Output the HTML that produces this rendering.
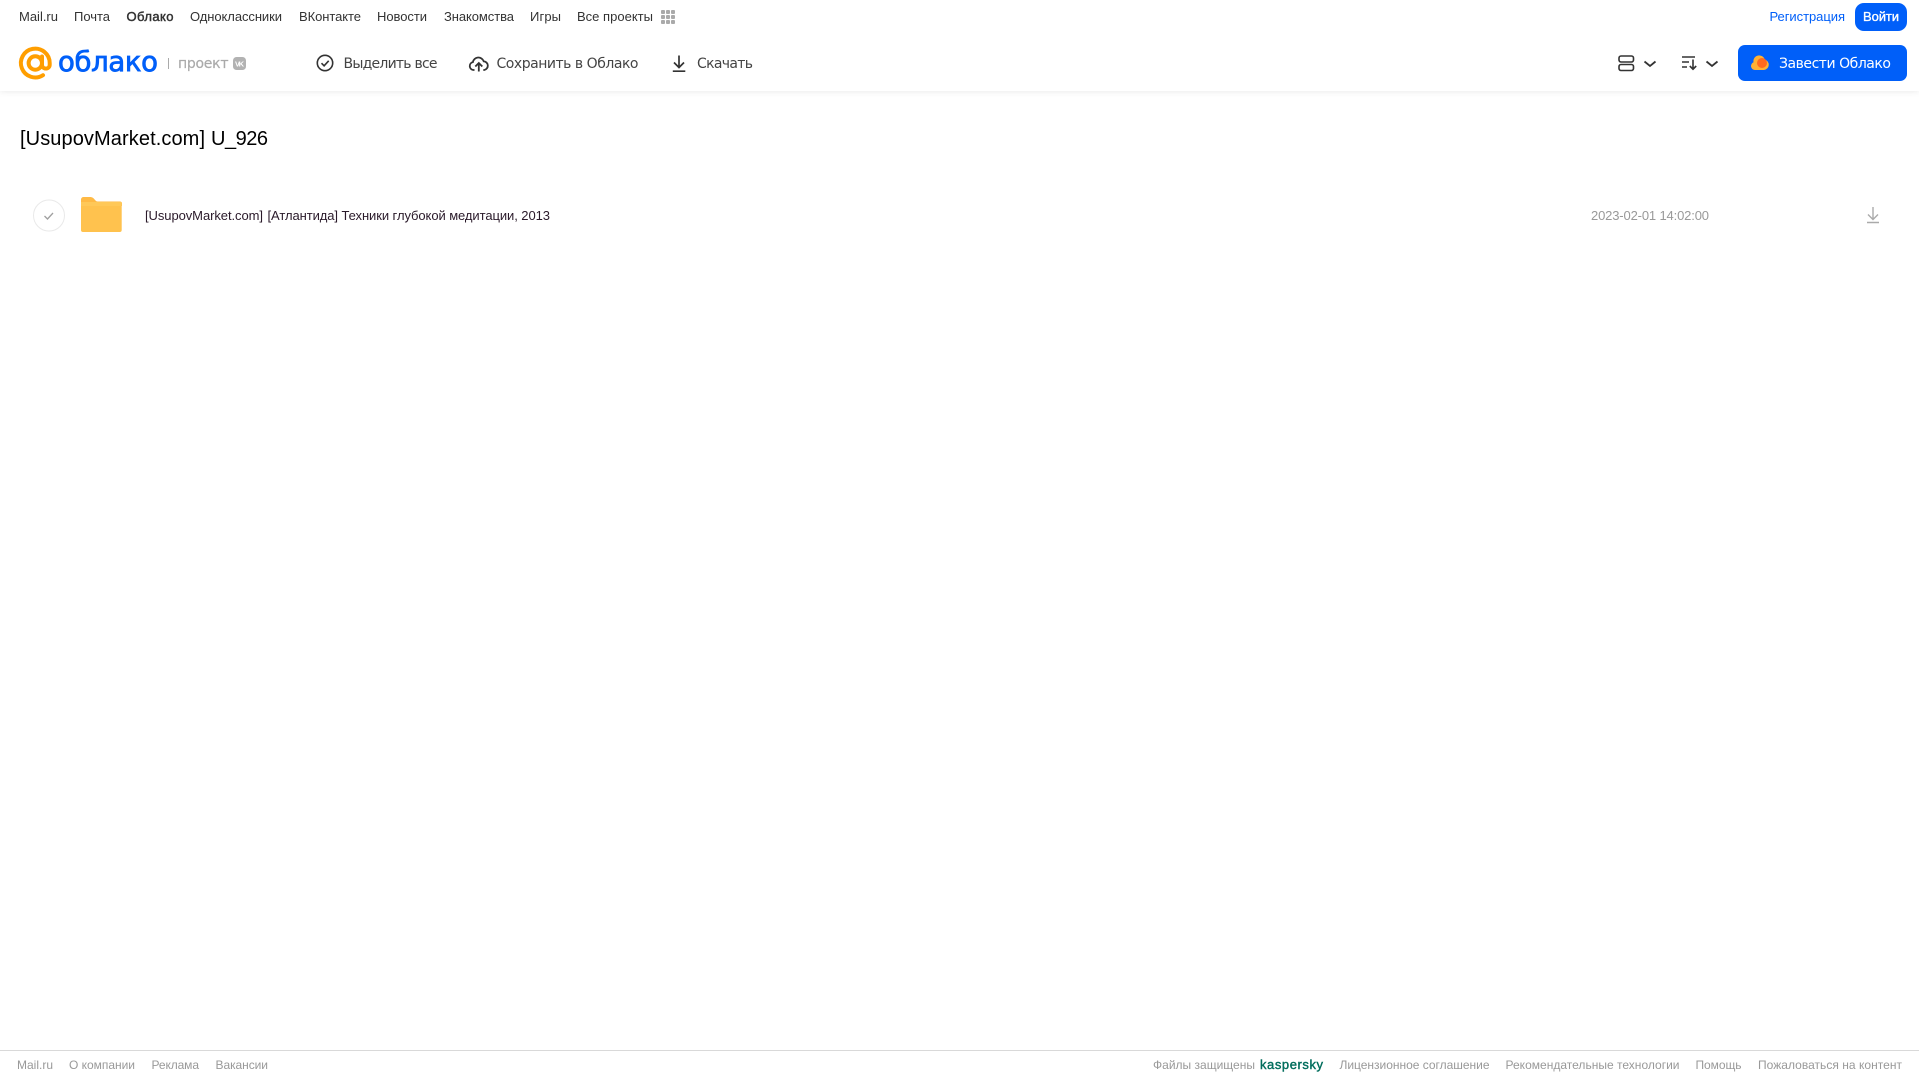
<!DOCTYPE html>
<html lang="ru">
<head>
<meta charset="utf-8">
<title>Облако Mail.ru</title>
<style>
html,body{margin:0;padding:0;background:#fff;width:1919px;height:1079px;overflow:hidden}
#hdr{position:absolute;left:0;top:0;width:1919px;height:91px;background:#fff;box-shadow:0 1px 6px rgba(0,0,0,.08)}
svg{position:absolute;left:0;top:0;display:block}
text{font-family:"Liberation Sans",Arial,sans-serif}
.n{font-size:13px;fill:#333}
.t{font-size:14px;fill:#444;font-family:"DejaVu Sans",sans-serif}
.f{font-size:12px;fill:#999}
</style>
</head>
<body>
<div id="hdr"></div>
<svg width="1919" height="1079" viewBox="0 0 1919 1079" xmlns="http://www.w3.org/2000/svg">
  <!-- top nav -->
  <text class="n" x="19" y="21" textLength="39" lengthAdjust="spacing">Mail.ru</text>
  <text class="n" x="74" y="21" textLength="36" lengthAdjust="spacing">Почта</text>
  <text class="n" x="126.500" y="21" textLength="47" lengthAdjust="spacing" stroke="#333" stroke-width=".45">Облако</text>
  <text class="n" x="190" y="21" textLength="92" lengthAdjust="spacing">Одноклассники</text>
  <text class="n" x="299" y="21" textLength="62" lengthAdjust="spacing">ВКонтакте</text>
  <text class="n" x="377" y="21" textLength="50" lengthAdjust="spacing">Новости</text>
  <text class="n" x="444" y="21" textLength="70" lengthAdjust="spacing">Знакомства</text>
  <text class="n" x="530" y="21" textLength="31" lengthAdjust="spacing">Игры</text>
  <text class="n" x="577" y="21" textLength="76" lengthAdjust="spacing">Все проекты</text>
  <g fill="#aaa">
    <rect x="661" y="10" width="4" height="4" rx="1"/><rect x="666" y="10" width="4" height="4" rx="1"/><rect x="671" y="10" width="4" height="4" rx="1"/>
    <rect x="661" y="15" width="4" height="4" rx="1"/><rect x="666" y="15" width="4" height="4" rx="1"/><rect x="671" y="15" width="4" height="4" rx="1"/>
    <rect x="661" y="20" width="4" height="4" rx="1"/><rect x="666" y="20" width="4" height="4" rx="1"/><rect x="671" y="20" width="4" height="4" rx="1"/>
  </g>
  <text x="1769.500" y="21" font-size="13" fill="#005ff9" textLength="75.500" lengthAdjust="spacing">Регистрация</text>
  <rect x="1855" y="3" width="52" height="28" rx="9" fill="#005ff9"/>
  <text x="1863" y="21" font-size="13" fill="#fff" stroke="#fff" stroke-width=".35" textLength="36" lengthAdjust="spacing">Войти</text>

  <!-- logo -->
  <g fill="none" stroke="#ff9e00" stroke-width="4" stroke-linecap="round">
    <circle cx="35.300" cy="63" r="6.700"/>
    <path d="M42 56.500v8.200a3.800 3.800 0 0 0 7.700 0V63A14.400 14.400 0 1 0 43 75.200"/>
  </g>
  <text x="58" y="71" font-size="27.500" fill="#005ff9" stroke="#005ff9" stroke-width=".8" style="font-family:'DejaVu Sans',sans-serif" textLength="100" lengthAdjust="spacing">облако</text>
  <rect x="168" y="58" width="1" height="11" fill="#aaa"/>
  <text x="178" y="68" font-size="14" fill="#aaa" stroke="#aaa" stroke-width=".2" style="font-family:'DejaVu Sans',sans-serif" textLength="50.500" lengthAdjust="spacing">проект</text>
  <rect x="233" y="57" width="13" height="13" rx="3.500" fill="#b2b2b2"/>
  <text x="235" y="66.500" font-size="7.500" font-weight="700" fill="#fff" textLength="9" lengthAdjust="spacing">VK</text>

  <!-- toolbar -->
  <circle cx="325" cy="63" r="7.700" fill="none" stroke="#333" stroke-width="1.600"/>
  <path d="M321.500 63.200l2.600 2.600 4.600-5" fill="none" stroke="#333" stroke-width="1.600"/>
  <text class="t" x="343.500" y="68" textLength="94" lengthAdjust="spacing">Выделить все</text>

  <path d="M474.500 70h-1a4 4 0 0 1-.6-7.900 5.600 5.600 0 0 1 10.800-.8 4.400 4.400 0 0 1 .6 8.700h-1" fill="none" stroke="#333" stroke-width="1.800"/>
  <path d="M478.800 71.500v-8M475.300 66.500l3.500-3.500 3.500 3.500" fill="none" stroke="#333" stroke-width="1.800"/>
  <text class="t" x="496.500" y="68" textLength="142" lengthAdjust="spacing">Сохранить в Облако</text>

  <path d="M679 55.500v12M674 62.500l5 5 5-5M672.800 71.200h12.500" fill="none" stroke="#333" stroke-width="1.700"/>
  <text class="t" x="697" y="68" textLength="56" lengthAdjust="spacing">Скачать</text>

  <!-- view / sort -->
  <g fill="none" stroke="#333" stroke-width="1.600">
    <rect x="1619" y="56" width="14.500" height="6" rx="2"/>
    <rect x="1619" y="64.500" width="14.500" height="6" rx="2"/>
    <path d="M1644.500 61.500l5.500 4.500 5.500-4.500" stroke-width="1.800"/>
    <path d="M1682 57h13M1682 62h7M1682 67h5M1693 59.500v9.500M1689.800 66l3.200 3.200 3.200-3.200"/>
    <path d="M1706.500 61.500l5.500 4.500 5.500-4.500" stroke-width="1.800"/>
  </g>

  <!-- CTA -->
  <rect x="1738" y="45" width="169" height="36" rx="7" fill="#005ff9"/>
  <path d="M1755 70a4 4 0 0 1-1.500-7.700 5.700 5.700 0 0 1 7-6.700 5.700 5.700 0 0 1 4.300 4 5.300 5.300 0 0 1-.8 10.400z" fill="#ffb133"/>
  <circle cx="1762" cy="63" r="5" fill="#ff6a1f"/>
  <text x="1779" y="68" font-size="14" fill="#fff" style="font-family:'DejaVu Sans',sans-serif" textLength="112" lengthAdjust="spacing">Завести Облако</text>

  <!-- title -->
  <text x="20" y="145" font-size="20" fill="#000" textLength="185" lengthAdjust="spacing">[UsupovMarket.com]</text>
  <text x="211" y="145" font-size="20" fill="#000" textLength="57" lengthAdjust="spacing">U_926</text>

  <!-- row -->
  <circle cx="49" cy="215.500" r="15.500" fill="#fff" stroke="#e9e9e9" stroke-width="1"/>
  <path d="M44.500 216l3 3 5.500-6" fill="none" stroke="#a0a0a0" stroke-width="1.300"/>
  <path d="M81 199.500a2.500 2.500 0 0 1 2.500-2.500h7a4 4 0 0 1 3 1.300l2 2.200a3 3 0 0 0 2 1h23a2.500 2.500 0 0 1 1.500 2.500v2H81z" fill="#ffba45"/>
  <path d="M81 203h40.700v27a2 2 0 0 1-2 2H83a2 2 0 0 1-2-2z" fill="#ffc24e"/>
  <rect x="81" y="202" width="40.700" height="4" fill="#ffc858"/>
  <text x="145" y="220" font-size="13" fill="#2a1a2a" textLength="118" lengthAdjust="spacing">[UsupovMarket.com]</text>
  <text x="267.500" y="220" font-size="13" fill="#2a1a2a" textLength="282.500" lengthAdjust="spacing">[Атлантида] Техники глубокой медитации, 2013</text>
  <text x="1591" y="220" font-size="13" fill="#999" textLength="118" lengthAdjust="spacing">2023-02-01 14:02:00</text>
  <path d="M1873 207v12M1868 214.500l5 5 5-5M1867 222.500h12" fill="none" stroke="#aaa" stroke-width="1.400"/>

  <!-- footer -->
  <rect x="0" y="1050" width="1919" height="1" fill="#d9d9d9"/>
  <text class="f" x="17" y="1069" textLength="36" lengthAdjust="spacing">Mail.ru</text>
  <text class="f" x="69" y="1069" textLength="66" lengthAdjust="spacing">О компании</text>
  <text class="f" x="151.500" y="1069" textLength="47.500" lengthAdjust="spacing">Реклама</text>
  <text class="f" x="215.500" y="1069" textLength="52.500" lengthAdjust="spacing">Вакансии</text>
  <text class="f" x="1153" y="1069" textLength="102" lengthAdjust="spacing">Файлы защищены</text>
  <text x="1260" y="1069" font-size="13" fill="#006d5c" stroke="#006d5c" stroke-width=".4" textLength="63" lengthAdjust="spacing">kaspersky</text>
  <text class="f" x="1339.500" y="1069" textLength="150" lengthAdjust="spacing">Лицензионное соглашение</text>
  <text class="f" x="1505.500" y="1069" textLength="174" lengthAdjust="spacing">Рекомендательные технологии</text>
  <text class="f" x="1695.500" y="1069" textLength="46" lengthAdjust="spacing">Помощь</text>
  <text class="f" x="1758" y="1069" textLength="144" lengthAdjust="spacing">Пожаловаться на контент</text>
</svg>
</body>
</html>
